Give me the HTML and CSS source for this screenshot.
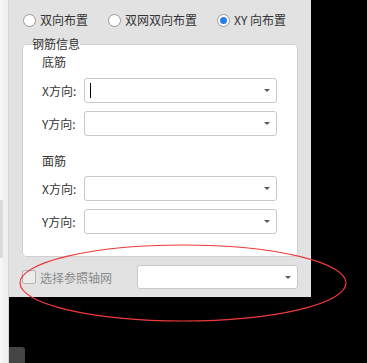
FILE: index.html
```html
<!DOCTYPE html>
<html lang="zh-CN">
<head>
    <meta charset="UTF-8">
    <title>钢筋布置</title>
    <link rel="stylesheet" href="styles.css">
</head>
<body>
    <div class="screen">
        <div class="side">
            <div class="side-top"></div>
            <div class="side-mid"></div>
            <div class="side-bottom"></div>
        </div>
        <div class="main">
            <div class="panel">
                <div class="radio-row">
                    <label class="radio"><span class="dot"></span>双向布置</label>
                    <label class="radio"><span class="dot"></span>双网双向布置</label>
                    <label class="radio checked"><span class="dot"></span>XY 向布置</label>
                </div>
                <fieldset class="group">
                    <legend>钢筋信息</legend>
                    <div class="section">底筋</div>
                    <div class="field">
                        <span class="label">X方向:</span>
                        <div class="select"><span class="cursor"></span><span class="caret"></span></div>
                    </div>
                    <div class="field">
                        <span class="label">Y方向:</span>
                        <div class="select"><span class="caret"></span></div>
                    </div>
                    <div class="section second">面筋</div>
                    <div class="field">
                        <span class="label">X方向:</span>
                        <div class="select"><span class="caret"></span></div>
                    </div>
                    <div class="field">
                        <span class="label">Y方向:</span>
                        <div class="select"><span class="caret"></span></div>
                    </div>
                </fieldset>
                <div class="bottom-row">
                    <label class="check"><span class="box"></span>选择参照轴网</label>
                    <div class="select grid-select"><span class="caret"></span></div>
                </div>
            </div>
            <div class="dark">
                <div class="tab-stub"></div>
            </div>
        </div>
    </div>

    <svg class="mark" width="367" height="363" viewBox="0 0 367 363">
        <ellipse cx="183" cy="283" rx="163" ry="38" fill="none" stroke="#f03a3a" stroke-width="1.2"/>
    </svg>
</body>
</html>
```

FILE: styles.css
```css
body {
    margin: 0;
    background: #000;
    font-family: "Noto Sans CJK SC", "Noto Sans", sans-serif;
    font-size: 12px;
    color: #333;
}
.screen {
    display: flex;
    width: 367px;
    height: 363px;
    overflow: hidden;
}
.side {
    width: 9px;
    flex-shrink: 0;
    display: flex;
    flex-direction: column;
    background: #f0f0f0;
}
.side-top {
    height: 200px;
    border-left: 3px solid #f7f7f7;
    border-right: 1px solid #d6d6d6;
    box-sizing: border-box;
}
.side-mid {
    height: 58px;
    border-left: 3px solid #dcdcdc;
    border-right: 1px solid #d6d6d6;
    box-sizing: border-box;
}
.side-bottom {
    flex: 1;
    border-left: 3px solid #f7f7f7;
    border-right: 1px solid #d6d6d6;
    box-sizing: border-box;
}
.main {
    flex: 1;
    display: flex;
    flex-direction: column;
}
.panel {
    width: 302px;
    height: 302px;
    box-sizing: border-box;
    background: #e2e2e2;
    padding: 0 13px 0 13px;
}
.radio-row {
    height: 37px;
    display: flex;
    align-items: center;
    padding-left: 1px;
    padding-top: 3px;
    box-sizing: border-box;
    white-space: nowrap;
}
.radio {
    display: flex;
    align-items: center;
    flex-shrink: 0;
    margin-right: 20px;
    line-height: 16px;
}
.radio .dot {
    width: 11px;
    height: 11px;
    border: 1px solid #9a9a9a;
    border-radius: 50%;
    background: #fff;
    margin-right: 4px;
    position: relative;
}
.radio.checked .dot::after {
    content: "";
    position: absolute;
    left: 2px;
    top: 2px;
    width: 7px;
    height: 7px;
    border-radius: 50%;
    background: #2b7de9;
}
.group {
    margin: 0;
    padding: 0 20px 23px 19px;
    border: 1px solid #cfcfcf;
    border-radius: 4px;
    background: #fff;
    height: 220px;
    box-sizing: border-box;
}
.group legend {
    padding: 0;
    margin-left: -10px;
    line-height: 14px;
    color: #333;
}
.section {
    line-height: 20px;
    margin-top: 1px;
    margin-bottom: 6px;
}
.section.second {
    margin-top: 15px;
    margin-bottom: 5px;
}
.field {
    display: flex;
    align-items: center;
    margin-bottom: 8px;
}
.label {
    width: 42px;
    white-space: nowrap;
}
.select {
    flex: 1;
    height: 25px;
    box-sizing: border-box;
    border: 1px solid #c9c9c9;
    border-radius: 3px;
    background: #fff;
    position: relative;
}
.caret {
    position: absolute;
    right: 6px;
    top: 10px;
    width: 0;
    height: 0;
    border-left: 3px solid transparent;
    border-right: 3px solid transparent;
    border-top: 3px solid #555a66;
}
.cursor {
    position: absolute;
    left: 5px;
    top: 4px;
    width: 1px;
    height: 15px;
    background: #000;
}
.bottom-row {
    display: flex;
    align-items: center;
    height: 40px;
}
.check {
    display: flex;
    align-items: center;
    color: #8a8a8a;
    width: 115px;
    white-space: nowrap;
}
.check .box {
    width: 12px;
    height: 12px;
    border: 1px solid #b4b4b4;
    border-radius: 2px;
    background: #ececec;
    margin-right: 4px;
}
.grid-select {
    height: 24px;
    flex: 1;
}
.dark {
    flex: 1;
    background: #000;
}
.tab-stub {
    margin-top: 50px;
    width: 16px;
    height: 20px;
    background: #454545;
    border-top-right-radius: 3px;
}
.mark {
    position: absolute;
    left: 0;
    top: 0;
    pointer-events: none;
}
```
